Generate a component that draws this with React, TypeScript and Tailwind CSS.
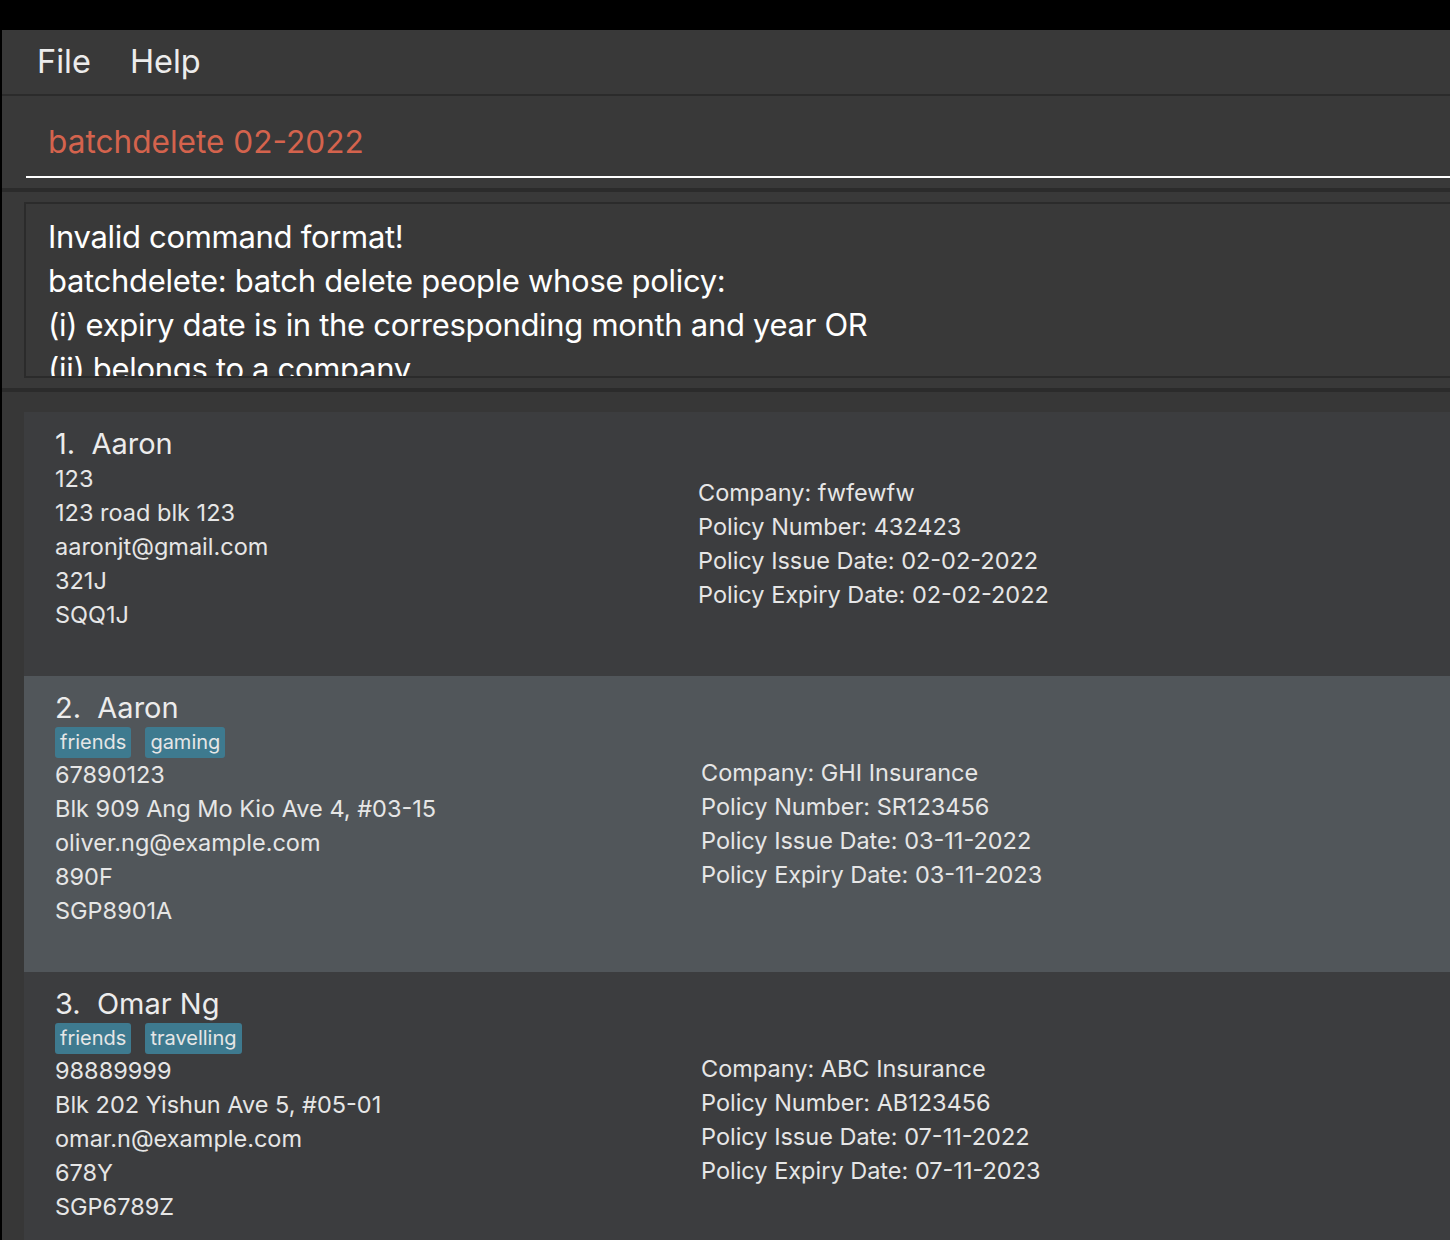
const people = [
  {
    name: "Aaron",
    tags: [] as string[],
    lines: ["123", "123 road blk 123", "aaronjt@gmail.com", "321J", "SQQ1J"],
    policy: ["Company: fwfewfw", "Policy Number: 432423", "Policy Issue Date: 02-02-2022", "Policy Expiry Date: 02-02-2022"],
    selected: false,
    leftWidth: "w-[674px]",
  },
  {
    name: "Aaron",
    tags: ["friends", "gaming"],
    lines: ["67890123", "Blk 909 Ang Mo Kio Ave 4, #03-15", "oliver.ng@example.com", "890F", "SGP8901A"],
    policy: ["Company: GHI Insurance", "Policy Number: SR123456", "Policy Issue Date: 03-11-2022", "Policy Expiry Date: 03-11-2023"],
    selected: true,
    leftWidth: "w-[677px]",
  },
  {
    name: "Omar Ng",
    tags: ["friends", "travelling"],
    lines: ["98889999", "Blk 202 Yishun Ave 5, #05-01", "omar.n@example.com", "678Y", "SGP6789Z"],
    policy: ["Company: ABC Insurance", "Policy Number: AB123456", "Policy Issue Date: 07-11-2022", "Policy Expiry Date: 07-11-2023"],
    selected: false,
    leftWidth: "w-[677px]",
  },
];

const resultLines = [
  "Invalid command format!",
  "batchdelete: batch delete people whose policy:",
  "(i) expiry date is in the corresponding month and year OR",
  "(ii) belongs to a company",
];

function PersonCard({ index, person }: { index: number; person: (typeof people)[number] }) {
  return (
    <div className={`flex items-center ${person.selected ? "bg-[#51565a]" : "bg-[#3c3d3f]"}`}>
      <div className={`${person.leftWidth} shrink-0 pl-[31px] pt-[13px] pb-[44px]`}>
        <div className="h-[37px] text-[29px] leading-[37px] text-[#ececec] whitespace-pre">
          {index}.  {person.name}
        </div>
        {person.tags.length > 0 && (
          <div className="flex gap-[14px] h-[32px] pt-[1px]">
            {person.tags.map((t) => (
              <span key={t} className="h-[31px] px-[5px] rounded-[3px] bg-[#3e7a8f] text-[20px] leading-[31px] text-[#e6e6e6]">
                {t}
              </span>
            ))}
          </div>
        )}
        {person.lines.map((l) => (
          <div key={l} className="h-[34px] text-[23.5px] leading-[34px] text-[#e6e6e6] whitespace-nowrap">
            {l}
          </div>
        ))}
      </div>
      <div>
        {person.policy.map((l) => (
          <div key={l} className="h-[34px] text-[23.5px] leading-[34px] text-[#e6e6e6] whitespace-nowrap">
            {l}
          </div>
        ))}
      </div>
    </div>
  );
}

export default function App() {
  return (
    <div className="w-[1450px] h-[1240px] bg-black flex flex-col overflow-hidden font-['Inter',sans-serif]">
      <div className="h-[30px] shrink-0" />
      <div className="flex-1 flex flex-col ml-[2px] bg-[#393939] overflow-hidden">
        {/* menu bar */}
        <div className="h-[64px] shrink-0 flex items-center gap-[39px] pl-[35px] text-[32.5px] text-[#ececec]">
          <span>File</span>
          <span>Help</span>
        </div>
        <div className="h-[2px] shrink-0 bg-[#2b2b2b]" />

        {/* command box */}
        <div className="h-[92px] shrink-0 pl-[24px] pb-[10px]">
          <div className="h-[82px] flex items-center pt-[12px] pl-[22px] border-b-2 border-white text-[31.6px] text-[#d4634d]">
            batchdelete 02-2022
          </div>
        </div>
        <div className="h-[4px] shrink-0 bg-[#2b2b2b]" />

        {/* result display */}
        <div className="h-[196px] shrink-0 pl-[22px] pt-[10px] pb-[10px]">
          <div className="h-full border-2 border-r-0 border-[#2b2b2b] pl-[22px] pt-[11px] overflow-hidden">
            {resultLines.map((l) => (
              <div key={l} className="h-[44px] text-[31px] leading-[44px] text-white whitespace-nowrap tracking-[-0.01em]">
                {l}
              </div>
            ))}
          </div>
        </div>
        <div className="h-[4px] shrink-0 bg-[#2b2b2b]" />

        {/* person list */}
        <div className="flex-1 pl-[22px] pt-[20px] bg-[#373737] overflow-hidden">
          {people.map((p, i) => (
            <PersonCard key={i} index={i + 1} person={p} />
          ))}
        </div>
      </div>
    </div>
  );
}
